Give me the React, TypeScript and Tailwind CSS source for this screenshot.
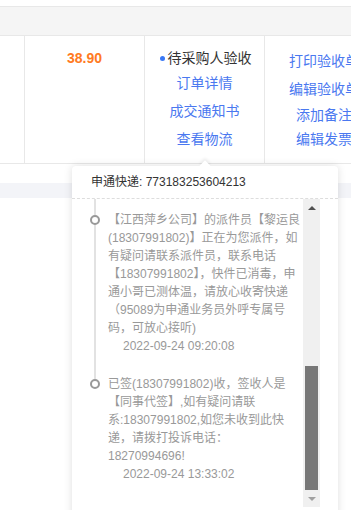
import React from "react";

const font = { fontFamily: '"Liberation Sans", "Noto Sans CJK SC", sans-serif' };

export default function App() {
  const item1 = [
    "【江西萍乡公司】的派件员【黎运良",
    "(18307991802)】正在为您派件，如",
    "有疑问请联系派件员，联系电话",
    "【18307991802】，快件已消毒，申",
    "通小哥已测体温，请放心收寄快递",
    "（95089为申通业务员外呼专属号",
    "码，可放心接听)",
  ];
  const item2 = [
    "已签(18307991802)收，签收人是",
    "【同事代签】,如有疑问请联",
    "系:18307991802,如您未收到此快",
    "递，请拨打投诉电话：",
    "18270994696!",
  ];
  return (
    <div className="relative w-[351px] h-[510px] overflow-hidden bg-white" style={font}>
      <div className="h-[7px] border-b border-[#e8e8e8] bg-white" />
      <div className="h-[29px] border-b border-[#e8e8e8] bg-[#f5f5f5]" />
      <div className="flex h-[128px] border-b border-[#e8e8e8]">
        <div className="w-[25px] shrink-0 border-r border-[#e8e8e8]" />
        <div className="w-[120px] shrink-0 border-r border-[#e8e8e8] flex justify-center pt-[12px]">
          <span className="text-[14px] leading-[20px] font-bold text-[#ff7a22]">38.90</span>
        </div>
        <div className="w-[120px] shrink-0 border-r border-[#e8e8e8] flex flex-col items-center pt-[12px] text-[14px] leading-[20px]">
          <div className="flex items-center text-[#333] pl-[2px]">
            <span className="w-[5px] h-[5px] rounded-full bg-[#3a78f5] mr-[3px]" />
            <span>待采购人验收</span>
          </div>
          <div className="mt-[5px] text-[#4a78f0]">订单详情</div>
          <div className="mt-[8px] text-[#4a78f0]">成交通知书</div>
          <div className="mt-[8px] text-[#4a78f0]">查看物流</div>
        </div>
        <div className="w-[118px] shrink-0 flex flex-col items-center pt-[15px] text-[14px] leading-[20px] text-[#4a78f0] whitespace-nowrap">
          <div>打印验收单</div>
          <div className="mt-[8px]">编辑验收单</div>
          <div className="mt-[6px]">添加备注</div>
          <div className="mt-[4px]">编辑发票</div>
        </div>
      </div>
      <div className="h-[19px]" />
      <div className="h-[15px] bg-[#f3f4f8]" />

      {/* Popover */}
      <div className="absolute left-[72px] top-[166px] w-[266px] h-[360px] bg-white rounded-[4px] shadow-[0_0_8px_rgba(0,0,0,0.13)]">
        <div className="absolute left-[129px] top-[-4px] w-[8px] h-[8px] bg-white rotate-45 shadow-[-2px_-2px_3px_rgba(0,0,0,0.06)]" />
        <div className="relative h-[33px] flex items-center pl-[19px] border-b border-dashed border-[#dddddd] text-[12px] text-[#333]">
          申通快递: 773183253604213
        </div>
        <div className="flex h-[308px] pr-[18px]">
          <div className="relative flex-1 overflow-hidden">
            <div className="absolute left-[22px] top-0 w-[2px] h-[185px] bg-[#e2e2e2]" />
            <div className="pt-[12px] text-[12px] leading-[18px] text-[#999]">
              <div className="relative pl-[36px]">
                <div className="absolute left-[18px] top-[4px] w-[10px] h-[10px] rounded-full border-2 border-[#999] bg-white" />
                {item1.map((l, i) => (
                  <div key={i} className="whitespace-nowrap">{l}</div>
                ))}
                <div className="pl-[15px]">2022-09-24 09:20:08</div>
              </div>
              <div className="relative pl-[36px] mt-[20px]">
                <div className="absolute left-[18px] top-[4px] w-[10px] h-[10px] rounded-full border-2 border-[#999] bg-white" />
                {item2.map((l, i) => (
                  <div key={i} className="whitespace-nowrap">{l}</div>
                ))}
                <div className="pl-[15px]">2022-09-24 13:33:02</div>
              </div>
            </div>
          </div>
          <div className="w-[17px] shrink-0 bg-[#f0f0f0] flex flex-col items-center">
            <div className="h-[17px] flex items-center justify-center">
              <div className="w-0 h-0 border-l-[4px] border-r-[4px] border-b-[4px] border-l-transparent border-r-transparent border-b-[#505050]" />
            </div>
            <div className="h-[150px]" />
            <div className="w-[13px] h-[124px] bg-[#777]" />
            <div className="flex-1 flex items-center justify-center">
              <div className="w-0 h-0 border-l-[4px] border-r-[4px] border-t-[4px] border-l-transparent border-r-transparent border-t-[#a0a0a0]" />
            </div>
          </div>
        </div>
      </div>
    </div>
  );
}
